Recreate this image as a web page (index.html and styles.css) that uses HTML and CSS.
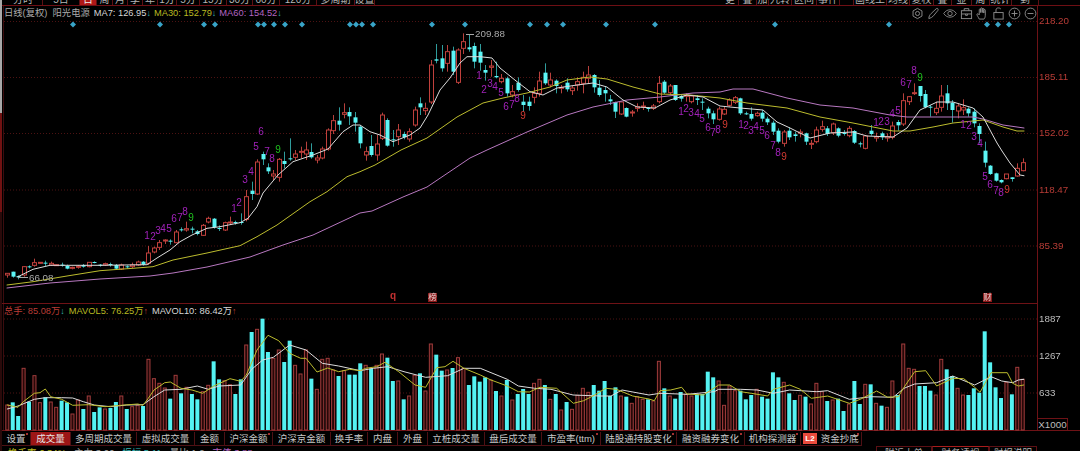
FILE: index.html
```html
<!DOCTYPE html>
<html lang="zh-CN">
<head>
<meta charset="utf-8">
<title>阳光电源 日线</title>
<link rel="stylesheet" href="styles.css">
</head>
<body>
<div class="app">
  <div class="edge"></div>
  <nav class="period-bar">
    <div class="period-left">
      <span class="ptab w39">分时</span><span class="ptab w37">5日</span><span class="ptab w17 on">日</span><span class="ptab w16">周</span><span class="ptab w15">月</span><span class="ptab w15">季</span><span class="ptab w15">年</span><span class="ptab w19">1分</span><span class="ptab w23">5分</span><span class="ptab w27">15分</span><span class="ptab w26">30分</span><span class="ptab w27">60分</span><span class="ptab w37">120分</span><span class="ptab w38">多周期</span><span class="ptab w20">设置</span>
    </div>
    <div class="period-right">
      <span class="ptab w17">更</span><span class="ptab w18">叠</span><span class="ptab w12">加</span><span class="ptab w23">九转</span><span class="ptab w25">区间</span><span class="ptab w23">事件</span><span class="ptab w14"></span><span class="ptab w33">画线工</span><span class="ptab w23">均线</span><span class="ptab w24">复权</span><span class="ptab w18">叠</span><span class="ptab w20">显</span><span class="ptab w18">周</span><span class="ptab w22">统计</span><span class="ptab w27">到</span>
    </div>
  </nav>

  <main class="panels">
    <svg id="chart" class="chart" viewBox="0 6 1080 425" width="1080" height="425"></svg>

    <div class="legend legend-main">
      <span class="name">日线(复权)&nbsp;&nbsp;阳光电源</span>
      <span class="ma7">MA7: 126.95<i class="down">↓</i></span>
      <span class="ma30">MA30: 152.79<i class="down">↓</i></span>
      <span class="ma60">MA60: 154.52<i class="down">↓</i></span>
    </div>

    <div class="tools">
      <svg class="tool" viewBox="0 0 14 14"><path d="M7 1.5l4.8 2.7v5.6L7 12.5 2.2 9.800V4.200z"/><circle cx="7" cy="7" r="2.2"/></svg>
      <svg class="tool" viewBox="0 0 14 14"><path d="M2 12.500c0-2.500 1-4 2.500-5.500L10 1.800c1.600-.8 2.400.4 1.800 1.800L7 9.500c-1.500 1.500-3 2.500-5 3z"/></svg>
      <svg class="tool wide" viewBox="0 0 16 14"><path d="M.8 7C3 3.800 5.300 2.800 8 2.800S13 3.800 15.200 7C13 10.200 10.700 11.200 8 11.200S3 10.200.8 7z"/><circle cx="8" cy="7" r="2.500"/></svg>
      <svg class="tool" viewBox="0 0 14 14"><rect x="1.500" y="4" width="11" height="8.500"/><path d="M4.500 4V1.800h5V4M1.500 7.500h11M6 7.500v1.500h2V7.500"/></svg>
      <svg class="tool" viewBox="0 0 14 14"><path d="M3.500 13C2.500 11 1 9 1 8c0-1 1.300-1 2.500.5V3c0-1.200 1.500-1.200 1.500 0v3-4.200c0-1.200 1.700-1.200 1.700 0V6 2.300c0-1.200 1.700-1.200 1.700 0V6.500 3.500c0-1.200 1.600-1.200 1.600 0V9c0 2-.7 3-1.300 4z"/></svg>
      <svg class="tool" viewBox="0 0 14 14"><rect x="2" y="6" width="10" height="7"/><path d="M4.300 6V3.200C4.300 1.500 5.500 1 7 1c1 0 2 .3 2.500 1.200"/></svg>
      <svg class="tool" viewBox="0 0 14 14"><circle cx="7" cy="7" r="5.800"/><path d="M3.800 7h6.400M7 3.800v6.400"/></svg>
      <svg class="tool" viewBox="0 0 14 14"><circle cx="7" cy="7" r="5.800"/><path d="M3.800 7h6.400"/></svg>
    </div>

    <div class="legend legend-vol">
      <span class="vol-total">总手: 85.08万<i class="down">↓</i></span>
      <span class="ma30">MAVOL5: 76.25万<i class="up">↑</i></span>
      <span class="ma7">MAVOL10: 86.42万<i class="up">↑</i></span>
    </div>
    <div class="unit">X1000</div>
  </main>

  <nav class="study-bar">
    <span class="stab w29 dot">设置</span><span class="stab w40 active">成交量</span><span class="stab w66">多周期成交量</span><span class="stab w58">虚拟成交量</span><span class="stab w30">金额</span><span class="stab w48 dot">沪深金额</span><span class="stab w58">沪深京金额</span><span class="stab w37">换手率</span><span class="stab w30">内盘</span><span class="stab w30">外盘</span><span class="stab w57">立桩成交量</span><span class="stab w57">盘后成交量</span><span class="stab w59 dot">市盈率(ttm)</span><span class="stab w76 dot">陆股通持股变化</span><span class="stab w68 dot">融资融券变化</span><span class="stab w56 dot">机构探测器</span><span class="stab w61 dot"><b class="l2">L2</b>资金抄底</span>
  </nav>

  <footer class="foot">
    <div class="foot-legend"><span class="yl">换手率 6.34%</span><span class="gy">主力 3.06</span><span class="cy">振幅 5.11</span><span class="gy">量比 1.2</span><span class="pu">市值 3.88</span></div>
    <div class="foot-tabs"><span class="ftab w56">附近大单</span><span class="ftab live w57">财务透视</span><span class="ftab w48">财报说明</span></div>
  </footer>
</div>
<script src="chart.js"></script>
</body>
</html>
```
FILE: styles.css
```css
* { box-sizing: border-box; }
html, body { margin: 0; padding: 0; background: #000; }
body { font-family: "Liberation Sans", "Noto Sans CJK SC", sans-serif; color: #c4c4c4; }
.app { position: relative; width: 1080px; height: 451px; overflow: hidden; display: flex; flex-direction: column; background: #000; padding-left: 2px; }
.edge { position: absolute; left: 0; top: 0; bottom: 0; width: 2px; z-index: 2; background: linear-gradient(#a8a8a8 0 113px, #701212 113px 212px, #2a0a0a 212px); }

.period-bar { height: 6px; flex: none; display: flex; justify-content: space-between; border-bottom: 1px solid #6e0f14; padding: 0 41px 0 2px; }
.period-left, .period-right { display: flex; height: 5px; }
.ptab { height: 5px; display: flex; align-items: flex-end; justify-content: center; overflow: hidden; font-size: 10px; line-height: 11px; color: #b5b5b5; border-right: 1px solid #5c1014; white-space: nowrap; }
.ptab.on { background: #b01818; color: #eee; }
.w12 { width: 12px; } .w14 { width: 14px; } .w15 { width: 15px; } .w16 { width: 16px; } .w17 { width: 17px; } .w18 { width: 18px; } .w19 { width: 19px; } .w20 { width: 20px; } .w22 { width: 22px; } .w23 { width: 23px; } .w24 { width: 24px; } .w25 { width: 25px; } .w26 { width: 26px; } .w27 { width: 27px; } .w29 { width: 29px; } .w30 { width: 30px; } .w33 { width: 33px; } .w37 { width: 37px; } .w38 { width: 38px; } .w39 { width: 39px; } .w40 { width: 40px; } .w48 { width: 48px; } .w56 { width: 56px; } .w57 { width: 57px; } .w58 { width: 58px; } .w59 { width: 59px; } .w61 { width: 61px; } .w66 { width: 66px; } .w68 { width: 68px; } .w76 { width: 76px; }

.panels { position: relative; height: 425px; flex: none; margin-left: -2px; }
.chart { display: block; filter: blur(0.3px); }

.grid { stroke: #4c1212; stroke-width: 1; stroke-dasharray: 1 2; }
.frame { stroke: #6e1216; stroke-width: 1; fill: none; }
.frame-left { stroke: #3c0c0e; stroke-width: 1; }
.wick-up { stroke: #b8403c; stroke-width: 1; }
.wick-down { stroke: #2f9c9c; stroke-width: 1; }
.body-up { fill: #000; stroke: #c0403c; stroke-width: 1; }
.body-down { fill: #5cf6f6; stroke: none; }
.vol-up { fill: #260808; stroke: #a03c3c; stroke-width: 1; }
.vol-down { fill: #54f2f2; stroke: none; }
.line { fill: none; stroke-linejoin: round; stroke-linecap: round; }
.l-ma7 { stroke: #dcdcdc; stroke-width: 1; }
.l-ma30 { stroke: #bcbc2e; stroke-width: 1; }
.l-ma60 { stroke: #b878c0; stroke-width: 1; }
.diamond { fill: #38a4c8; }
.td { font: 10px "Liberation Sans", sans-serif; text-anchor: middle; dominant-baseline: middle; }
.td-p { fill: #a021b8; }
.td-g { fill: #1fc01f; }
.td-r { fill: #d43a32; }
.axis { font: 9.800px "Liberation Sans", sans-serif; dominant-baseline: middle; }
.axis-r { fill: #b83c36; }
.axis-g { fill: #bdbdbd; }
.peak { font: 9.800px "Liberation Sans", sans-serif; fill: #a8a8a8; dominant-baseline: middle; }
.peak-line { stroke: #a8a8a8; stroke-width: 1; }
.mark { font: 8.500px "Noto Sans CJK SC", sans-serif; text-anchor: middle; dominant-baseline: middle; fill: #e8d0d0; }
.mark-q { fill: #c03030; font: bold 10px "Liberation Sans", sans-serif; }
.mark-box { fill: #8a1818; }

.legend { position: absolute; left: 4px; display: flex; font-size: 9.300px; line-height: 14px; white-space: nowrap; }
.legend i { font-style: normal; font-size: 9px; }
.legend-main { top: 0; gap: 3px; }
.legend-vol { top: 298px; gap: 4px; }
.name { color: #aaa; margin-right: 1px; }
.ma7 { color: #d6d6d6; }
.ma30 { color: #b9b921; }
.ma60 { color: #b264c2; }
.vol-total { color: #b83c36; }
.down { color: #35b5b5; }
.up { color: #b83c36; }

.tools { position: absolute; top: 0; right: 43px; height: 14px; display: flex; align-items: center; gap: 3px; }
.tool { width: 13px; height: 13px; fill: none; stroke: #8e8e8e; stroke-width: 1; }
.tool.wide { width: 14px; }

.unit { position: absolute; left: 1037px; top: 412px; width: 31px; height: 13px; border: 1px solid #6e1216; font-size: 9.800px; line-height: 11px; color: #bdbdbd; text-align: center; }

.study-bar { height: 15px; flex: none; display: flex; padding-top: 1px; }
.stab { position: relative; display: flex; align-items: center; justify-content: center; height: 14px; font-size: 9.500px; line-height: 13px; color: #c8c8c8; border-right: 1px solid #4e1014; border-bottom: 1px solid #4e1014; white-space: nowrap; }
.stab.active { background: #9c1616; color: #e6e6e6; }
.stab.dot::after { content: ""; position: absolute; right: 2px; top: 1px; width: 2px; height: 2px; border-radius: 50%; background: #d84040; }
.l2 { font: bold 8px "Liberation Sans", sans-serif; background: #ea4b3c; color: #fff; padding: 1px 2px; margin-right: 4px; }

.foot { flex: 1; display: flex; justify-content: space-between; padding-right: 43px; overflow: hidden; }
.foot-legend { display: flex; gap: 8px; font-size: 9.500px; line-height: 14px; padding-left: 6px; }
.yl { color: #b9b921; } .gy { color: #aaa; } .cy { color: #35b5b5; } .pu { color: #b264c2; }
.foot-tabs { display: flex; }
.ftab { height: 14px; border: 1px solid #5c1014; border-bottom: 0; font-size: 9.500px; line-height: 12px; color: #b5b5b5; text-align: center; }
.ftab.live { border-top-color: #a81c1c; }
```
FILE: chart.js
```js
var NS = 'http://www.w3.org/2000/svg';
var svg = document.getElementById('chart');
function el(name, attrs, text) {
  var n = document.createElementNS(NS, name);
  for (var k in attrs) n.setAttribute(k, attrs[k]);
  if (text !== undefined) n.textContent = text;
  svg.appendChild(n);
  return n;
}
function X(i) { return 7.3 + 5.43 * i; }

// grid
[21.5, 77.5, 133.5, 190, 246, 319, 356, 393].forEach(function (y) {
  el('line', { x1: 4, x2: 1037, y1: y, y2: y, 'class': 'grid' });
});
el('line', { x1: 3.5, x2: 3.5, y1: 6, y2: 431, 'class': 'frame-left' });
el('line', { x1: 1037.5, x2: 1037.5, y1: 6, y2: 451, 'class': 'frame' });
el('line', { x1: 0, x2: 1037, y1: 303.5, y2: 303.5, 'class': 'frame' });
el('line', { x1: 0, x2: 1080, y1: 430.5, y2: 430.5, 'class': 'frame' });

// volume: [colour flag, top in 3x-zoom units]
var vol = 'R315 C307 C348 R205 C305 R227 R308 C292 R306 R322 C302 C307 R342 R300 C327 R288 C336 C322 R327 C324 C306 R288 C327 R320 R316 C318 R178 R236 R250 R264 C296 R226 C280 R262 C282 C298 R275 R256 C184 C238 R242 R254 C282 C238 R135 C96 R88 C56 C156 R175 R150 C186 C122 R196 R222 R150 C236 R268 R178 R175 R210 C228 R212 C224 C224 ' +
  'C190 R196 C205 R196 R162 C173 C243 R243 C298 R288 R226 C220 R273 R132 C164 C212 R210 C204 R173 R205 C255 C229 C245 C232 R240 C273 R288 C240 R300 C282 C267 C282 R250 R238 C255 R298 C282 R330 C306 R328 R286 R265 R277 C255 C272 C243 C288 C262 R288 C290 R310 R290 R298 C298 R303 R184 C265 R288 C296 C276 R283 R288 C282 C282 C215 C232 R243 ' +
  'R316 R258 R272 C272 C298 C285 R268 C290 C296 C217 C232 R247 C280 C300 R286 C290 R312 R250 R275 C303 R300 C296 C333 R312 C243 C312 R253 C253 R310 C317 R322 R243 C285 R132 R205 R208 C258 C258 C272 R285 R178 C208 C228 R265 R285 C285 C265 C278 C94 C187 C262 C294 R247 C283 R202 R238';
vol.split(' ').forEach(function (t, i) {
  var top = 300 + Number(t.slice(1)) / 3, x = X(i);
  if (t[0] === 'R') {
    el('rect', { x: x - 1.5, y: top, width: 3, height: 430 - top, 'class': 'vol-up' });
  } else {
    el('rect', { x: x - 2, y: top, width: 4, height: 430 - top, 'class': 'vol-down' });
  }
});

// candles: colour, high, body top, body bottom, low (3x-zoom units)
var c = 'R820 820 825 833;C815 815 830 833;C826 828 832 838;R798 800 825 830;C796 799 801 805;R776 788 796 800;R786 787 789 791;C782 788 791 798;R785 790 795 798;R793 794 795 796;C788 794 796 800;C794 798 806 808;R800 802 804 808;R796 799 802 806;C792 795 800 803;R786 787 800 802;C784 786 788 790;C792 794 797 800;R788 791 795 798;C788 792 795 800;C792 795 806 808;R791 795 807 810;C796 799 802 806;R788 795 800 804;R782 786 795 798;C783 785 794 797;R738 759 790 795;R740 744 756 760;R720 728 742 750;R718 720 723 732;C718 722 724 734;R690 696 728 730;C682 688 690 695;R665 686 690 695;C680 686 688 700;C690 694 702 706;R672 676 706 708;R650 655 666 670;C654 656 682 686;C676 684 686 693;R665 668 690 693;R650 666 669 675;C662 666 668 674;C640 666 669 674;R570 590 658 664;C545 572 582 600;R478 486 582 585;C455 462 478 495;C490 502 514 522;R510 522 528 540;R474 478 532 545;C455 483 492 505;C415 475 478 482;R450 462 472 480;R440 454 456 475;R425 450 462 480;C430 456 472 476;R465 474 480 490;R440 447 474 478;' +
  'R385 390 447 452;R345 362 392 402;C322 362 374 392;R310 338 343 355;C322 336 349 375;C336 352 368 395;' +
  'C375 380 430 445;R440 455 465 482;C405 438 465 470;R405 432 465 482;R338 345 415 420;C355 360 437 440;C390 418 420 440;R372 390 410 435;C395 402 412 418;R385 395 417 425;R320 330 375 380;C292 310 322 345;R308 325 332 345;R180 195 306 312;C132 178 182 190;C135 175 205 215;R135 155 190 215;C140 152 215 225;R145 150 247 252;R100 125 145 162;C105 142 148 155;C128 138 185 205;C132 155 188 212;C195 210 218 242;R180 198 202 230;C185 228 232 235;R222 235 245 250;C230 235 280 290;R255 275 285 292;C232 248 270 275;C285 305 315 335;C290 305 318 332;R262 280 292 310;R215 243 280 290;C190 218 250 255;R218 240 255 262;C238 242 258 280;R255 262 265 280;C235 248 268 275;R258 264 272 285;R232 245 255 272;R215 232 250 280;R198 225 235 250;C222 225 262 278;C240 263 285 290;C258 270 280 305;C285 298 304 315;C305 306 335 354;R305 306 342 345;C322 324 350 352;R330 336 338 350;R310 320 325 335;R305 318 321 330;C322 324 327 335;R312 318 325 330;R228 250 305 310;C240 245 278 282;R252 258 278 285;C255 255 300 303;C282 288 296 305;R280 286 289 305;R286 288 305 310;C285 295 300 315;C295 305 307 330;C320 326 340 355;C332 340 358 372;R320 327 358 362;' +
  'R320 328 342 345;R295 300 316 320;R288 293 307 312;C293 295 340 345;C335 340 343 345;C322 342 356 362;R335 340 347 350;C330 338 356 365;C350 356 367 375;C362 368 395 405;C385 392 425 430;R390 396 430 440;C382 392 412 420;C395 403 408 425;R388 396 400 412;C398 400 425 435;R420 430 432 447;R380 390 425 430;R362 380 388 395;C378 385 402 408;R368 372 398 405;C382 385 407 412;C390 398 402 407;R378 385 407 412;C390 393 428 432;C425 430 433 442;R405 408 445 448;C375 392 402 407;R398 410 414 425;C395 400 412 420;R400 410 414 425;R365 378 412 418;C360 366 376 392;R280 302 372 378;R288 290 305 315;R250 278 280 285;C258 258 288 305;C270 282 322 325;C315 320 322 350;R305 325 338 345;R255 288 322 335;C255 280 310 330;C300 308 330 368;R310 318 333 355;R298 323 330 345;C322 326 340 350;C325 335 370 382;C370 378 402 430;C425 452 488 502;C495 497 522 525;C518 520 542 545;C538 540 547 550;R522 522 536 538;C532 532 537 545;R490 505 528 530;R475 488 512 514';
c.split(';').forEach(function (t, i) {
  var up = t[0] === 'R';
  var p = t.slice(1).split(' ').map(function (v) { return Number(v) / 3; });
  var x = X(i), xs = Math.round(x) + 0.5;
  el('line', { x1: xs, x2: xs, y1: p[0], y2: p[3], 'class': up ? 'wick-up' : 'wick-down' });
  var h = Math.max(p[2] - p[1], 1);
  if (up) el('rect', { x: xs - 2, y: p[1], width: 4, height: h, 'class': 'body-up' });
  else el('rect', { x: xs - 2, y: p[1], width: 4, height: h, 'class': 'body-down' });
});

// moving averages
function line(cls, pts) { el('polyline', { points: pts, 'class': 'line ' + cls }); }
line('l-ma60', '7,288 50,283 100,279 150,276 173,273 207,267 250,257 283,245 313,235 360,213 372,211 403,197 427,187 470,158 487,150 527,132 567,115 593,107 627,100 660,97 693,93 720,92 733,89 753,89 787,98 820,105 853,108 890,115 907,117 927,117 973,117 983,119 1003,125 1024,128');
line('l-ma30', '7,285 33,281.700 67,276 100,270.700 133,268.300 153,266.700 173,260 207,253 240,245.700 257,236.700 277,225 310,201.700 327,191.700 347,176.700 360,171.700 375,165 401,150 427,138 457,117 483,103 503,98 527,93 550,87 567,80 590,77 607,79 633,87 660,94 690,95 720,98 747,103 787,108 820,117 853,123 893,131 910,131 933,127 953,123 983,120 1003,127 1017,131 1024,131');
line('l-ma7', '18,276.700 33,269.300 50,265.300 67,265.300 100,265.300 147,264.700 157,258 170,250 180,241.700 192,235 207,228.300 220,226.700 240,222.700 248,218.300 257,206.700 263,193 278,175 293,161.700 313,155 328,149 343,131.700 353,125 360,125 370,131.700 380,135 393,141.700 410,135 420,128 428,115 440,90 450,78 460,63 467,56.700 480,56.700 492,58 500,68 517,81.700 530,91.700 543,95 557,88 577,85 593,83 607,87 623,100 637,107 655,108 670,100 687,95 703,97 720,106 740,108 763,110 777,122 790,128 810,138 830,133 853,132 867,136 893,137 907,128 920,110 937,102 953,102 973,108 983,117 997,143 1002,151 1010,163 1020,175 1024,175.700');

// volume averages: x origin of the zoom crop, then zoom coordinates
function zoomLine(cls, segs) {
  var out = [];
  segs.forEach(function (s) {
    s[1].split(' ').forEach(function (p) {
      var q = p.split(',');
      out.push((s[0] + q[0] / 3).toFixed(1) + ',' + (300 + q[1] / 3).toFixed(1));
    });
  });
  line(cls, out.join(' '));
}
zoomLine('l-ma7', [
  [0, '22,327 54,318 103,298 136,293 185,293 218,294 250,305 283,315 331,320 380,315 429,314 462,290 494,270 543,268 592,258 625,268 657,258 722,255 755,208 788,180 820,172 869,135 918,150 967,190 1016,198'],
  [360, '1,212 40,205 83,200 132,215 197,232 263,227 312,205 361,205 442,238 475,258 524,265 573,268 639,285 720,288 753,288 786,270 867,285 900,280 981,283 1063,275'],
  [720, '-4,268 62,268 111,270 160,280 209,270 290,275 323,272 388,298 454,290 519,292 552,265 584,252 650,248 698,228 764,255 813,230 845,243 878,248 895,240 911,238']
]);
zoomLine('l-ma30', [
  [0, '22,315 54,322 70,305 103,280 120,278 136,267 152,290 185,298 218,316 266,314 315,320 364,316 413,312 429,316 445,295 462,270 494,248 511,246 543,265 576,270 608,280 641,258 690,236 722,244 739,225 771,150 804,106 836,122 869,160 902,175 918,175 951,216 983,204 1016,215 1049,208'],
  [360, '1,212 17,205 50,200 75,187 116,215 165,255 197,262 230,203 255,200 279,184 312,205 361,225 393,240 442,258 475,275 508,276 540,262 590,265 640,310 671,302 704,285 737,265 769,268 818,288 867,297 883,302 900,272 932,270 965,262 981,282 1030,285'],
  [720, '-4,255 29,255 62,275 94,280 143,288 160,268 209,255 241,268 274,295 323,288 388,310 421,298 470,273 503,292 535,290 552,262 584,215 617,212 650,258 698,235 731,236 764,262 780,277 813,218 862,218 878,250 895,258 911,255']
]);

// TD sequence labels: x,y,digit,colour
var td = [
  [147,236,1],[153,237,2],[158,231,3],[163,229,4],[169,229,5],[174,219,6],[180,218,7],[185,212,8],[191,218,9,'g'],
  [234,209,1],[239,203,2],[245,180,3],[251,172,4],[256,147,5],[261,132,6],[267,152,7],[272,159,8],[278,150,9,'g'],
  [479,76,1],[484,90,2],[490,84,3],[495,87,4],[501,93,5],[506,107,6],[512,105,7],[517,99,8],[523,116,9,'r'],
  [681,112,1],[686,109,2],[691,113,3],[697,114,4],[702,119,5],[708,128,6],[713,133,7],[718,130,8],[725,125,9,'r'],
  [741,125,1],[746,126,2],[751,131,3],[756,127,4],[762,131,5],[767,136,6],[773,146,7],[778,153,8],[784,157,9,'r'],
  [876,123,1],[881,122,2],[887,122,3],[892,114,4],[898,111,5],[903,83,6],[909,85,7],[914,71,8],[920,78,9,'g'],
  [963,125,1],[969,126,2],[974,137,3],[980,144,4],[985,177,5],[990,185,6],[996,191,7],[1001,193,8],[1007,190,9,'r']
];
td.forEach(function (d) {
  el('text', { x: d[0], y: d[1], 'class': 'td td-' + (d[3] || 'p') }, d[2]);
});

// signal diamonds
[73,160,204,215,258,264,274,285,302,350,356,362,373,432,465,530,547,563,606,655,775,889,987,998,1009].forEach(function (x) {
  el('polygon', { points: (x - 3) + ',24.5 ' + x + ',21.5 ' + (x + 3) + ',24.5 ' + x + ',27.5', 'class': 'diamond' });
});

// extreme price labels
el('line', { x1: 466, x2: 474, y1: 34.5, y2: 34.5, 'class': 'peak-line' });
el('text', { x: 475, y: 34.5, 'class': 'peak' }, '209.88');
el('line', { x1: 18, x2: 28, y1: 277.5, y2: 277.5, 'class': 'peak-line' });
el('text', { x: 29, y: 278, 'class': 'peak' }, '66.08');

// event markers above the volume panel
el('text', { x: 393, y: 296.5, 'class': 'mark mark-q' }, 'q');
el('rect', { x: 428, y: 293, width: 9, height: 9, 'class': 'mark-box' });
el('text', { x: 432.5, y: 297.5, 'class': 'mark' }, '榜');
el('rect', { x: 983, y: 293, width: 9, height: 9, 'class': 'mark-box' });
el('text', { x: 987.5, y: 297.5, 'class': 'mark' }, '财');

// axes
[['218.20', 21.5], ['185.11', 77.5], ['152.02', 133.5], ['118.47', 190], ['85.39', 246]].forEach(function (a) {
  el('text', { x: 1039, y: a[1], 'class': 'axis axis-r' }, a[0]);
});
[['1887', 319], ['1267', 356], ['633', 393]].forEach(function (a) {
  el('text', { x: 1039, y: a[1], 'class': 'axis axis-g' }, a[0]);
});
```
